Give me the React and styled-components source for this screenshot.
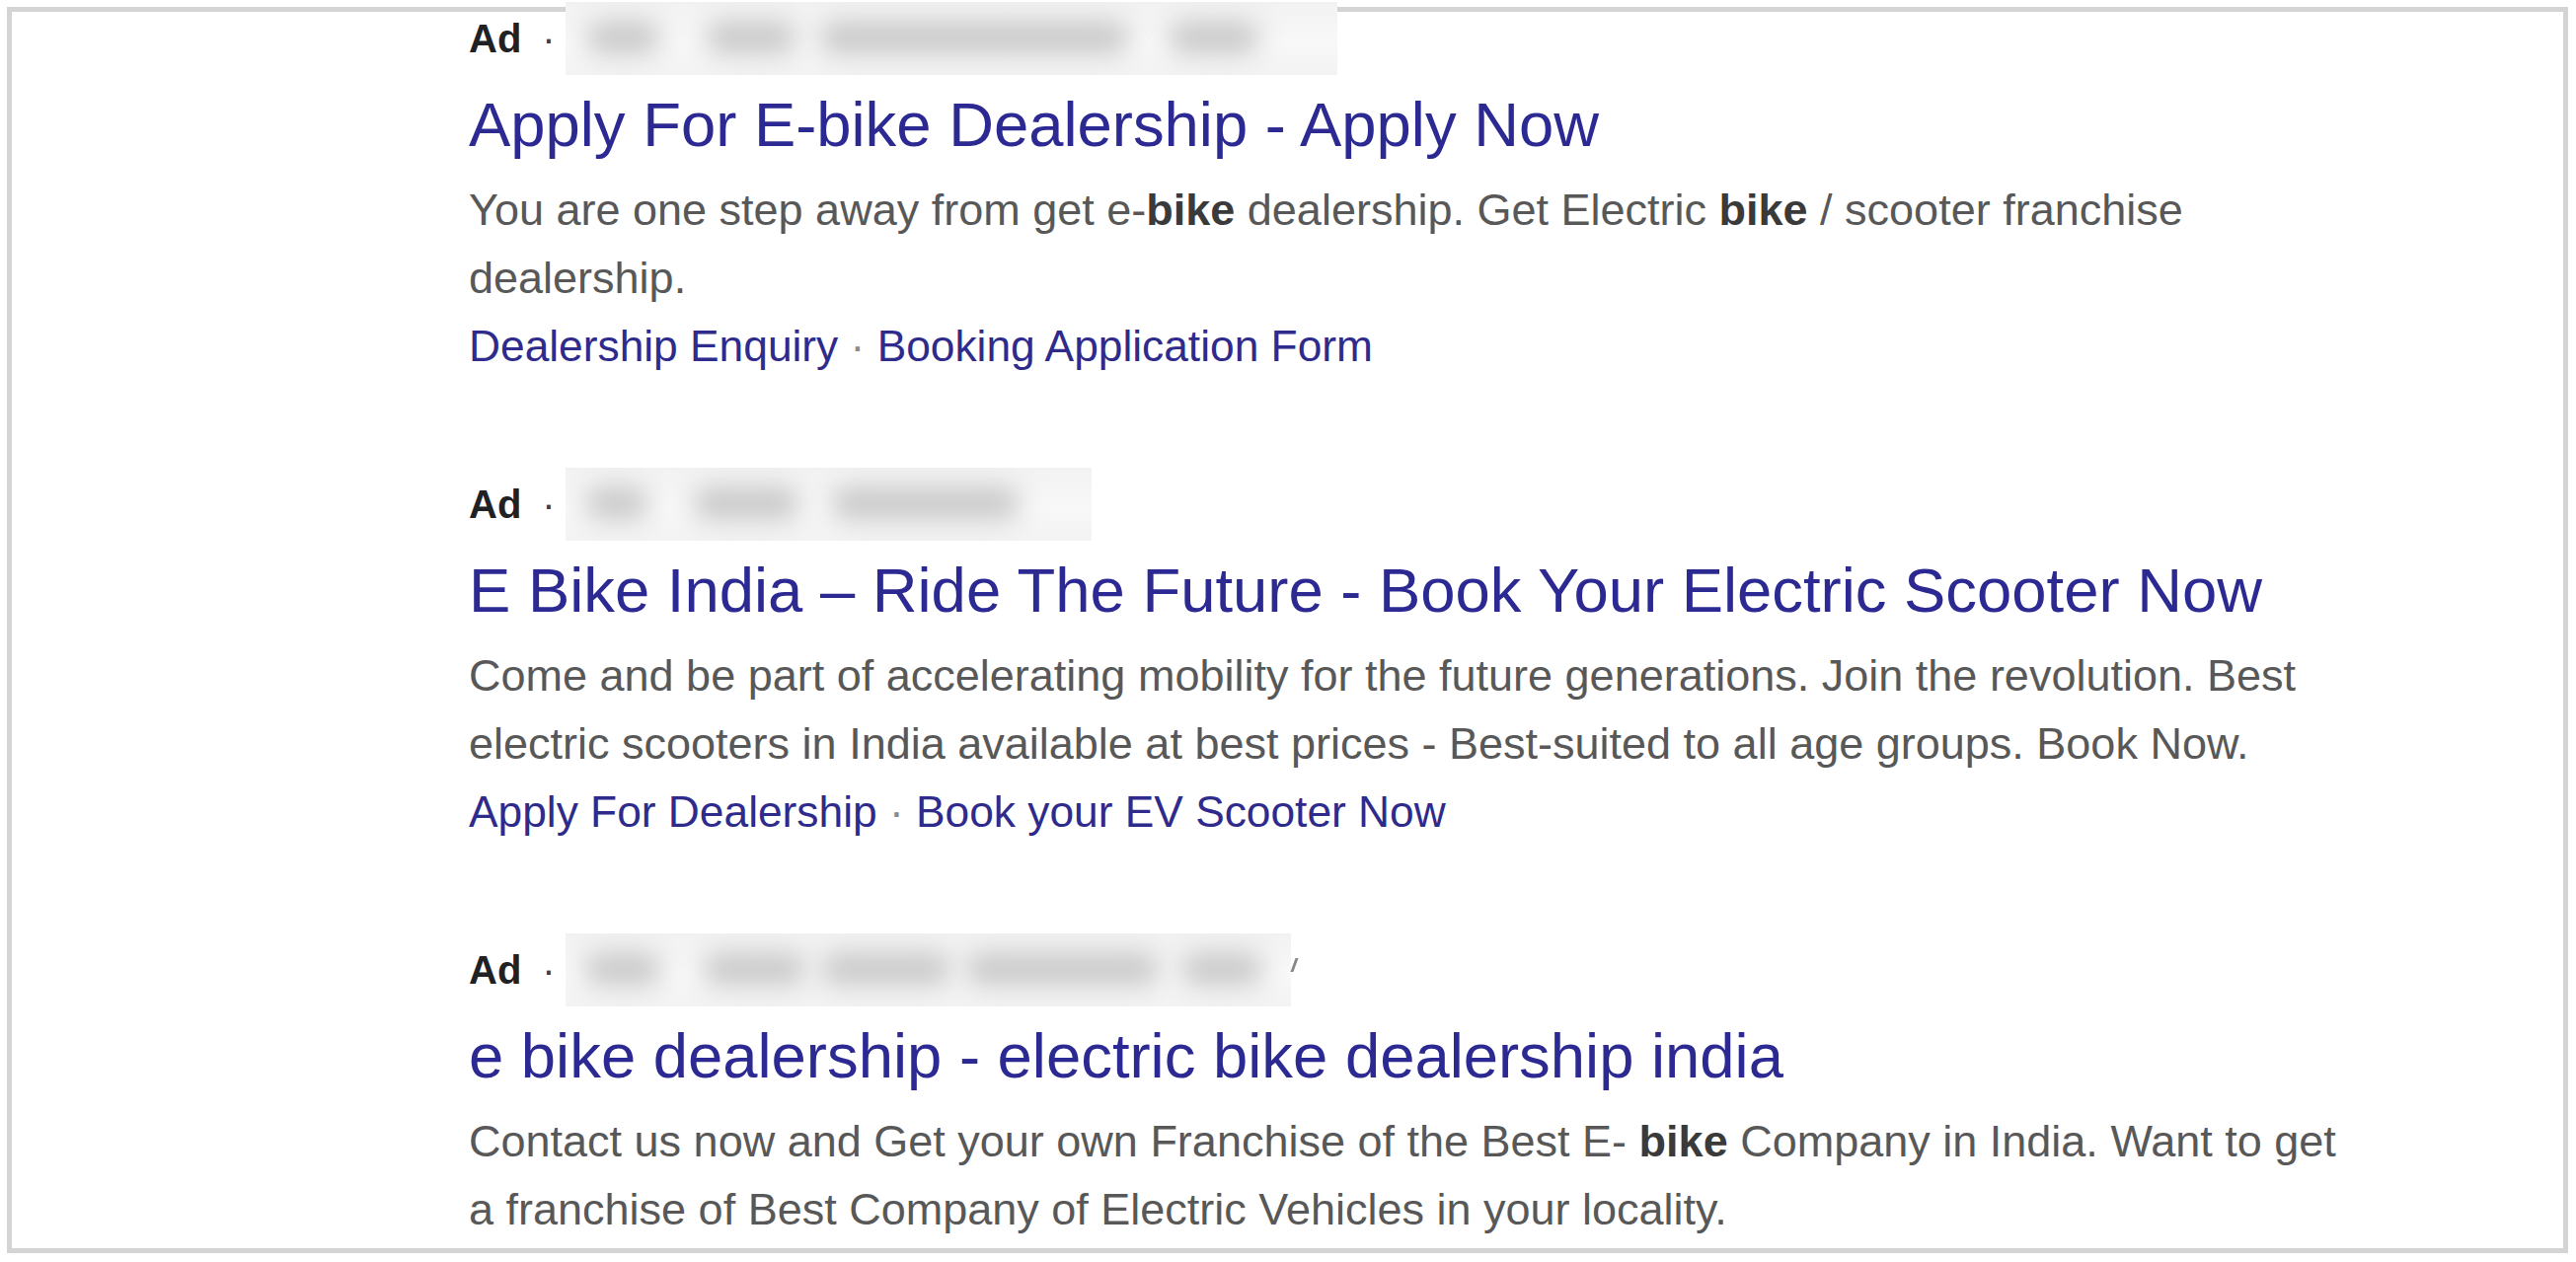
import React from "react";
import styled, { createGlobalStyle } from "styled-components";

const GlobalStyle = createGlobalStyle`
  html, body {
    margin: 0;
    padding: 0;
    background: #ffffff;
  }
  body {
    font-family: "Liberation Sans", Arial, sans-serif;
  }
`;

const Frame = styled.div`
  box-sizing: border-box;
  margin: 7px 0 0 7px;
  width: 2595px;
  height: 1263px;
  border: 5px solid #d4d4d4;
  padding: 2px 0 0 463px;
  background: #ffffff;
`;

const AdList = styled.div`
  display: flex;
  flex-direction: column;
  gap: 101px;
  width: 1910px;
`;

const AdItem = styled.article`
  display: flex;
  flex-direction: column;
`;

const AdMeta = styled.div`
  display: flex;
  align-items: center;
  height: 50px;
  font-size: 40px;
  line-height: 50px;
  color: #202124;
`;

const AdTag = styled.span`
  font-weight: 700;
`;

const MetaDot = styled.span`
  margin: 0 10px 0 21px;
  font-weight: 400;
  color: #3c4043;
`;

const BlurredUrl = styled.div`
  position: relative;
  box-sizing: border-box;
  flex: none;
  width: ${(p) => p.$w}px;
  height: 74px;
  margin: -12px 0;
  overflow: hidden;
  background: linear-gradient(180deg, #f2f2f2 0%, #f8f8f8 55%, #f3f3f3 100%);
`;

const Blob = styled.span`
  position: absolute;
  top: 19px;
  left: ${(p) => p.$x}px;
  width: ${(p) => p.$w}px;
  height: 34px;
  border-radius: 17px;
  background: #c9c9c9;
  filter: blur(13px);
`;

const UrlTail = styled.span`
  flex: none;
  width: 3px;
  height: 14px;
  margin: 0 0 10px 2px;
  background: #6a6a6a;
  transform: skewX(-20deg);
  opacity: 0.8;
`;

const Title = styled.h3`
  margin: 25px 0 0;
  font-size: 63.4px;
  line-height: 74px;
  font-weight: 400;
  color: #2c2a92;
  white-space: nowrap;
`;

const Description = styled.p`
  margin: 15px 0 0;
  font-size: 45px;
  line-height: 69px;
  color: #585858;

  b {
    font-weight: 700;
    color: #3a3a3a;
  }
`;

const Sitelinks = styled.div`
  font-size: 44.3px;
  line-height: 69px;
  color: #2e2b8c;
  white-space: nowrap;
`;

const Sep = styled.span`
  color: #8a8a8a;
`;

const ads = [
  {
    urlWidth: 782,
    blobs: [
      [21, 75],
      [142, 92],
      [257, 314],
      [611, 92],
    ],
    tail: false,
    title: "Apply For E-bike Dealership - Apply Now",
    desc: (
      <>
        You are one step away from get e-<b>bike</b> dealership. Get Electric{" "}
        <b>bike</b> / scooter franchise dealership.
      </>
    ),
    links: ["Dealership Enquiry", "Booking Application Form"],
  },
  {
    urlWidth: 533,
    blobs: [
      [20, 64],
      [129, 108],
      [269, 191],
    ],
    tail: false,
    title: "E Bike India – Ride The Future - Book Your Electric Scooter Now",
    desc: (
      <>
        Come and be part of accelerating mobility for the future generations.
        Join the revolution. Best electric scooters in India available at best
        prices - Best-suited to all age groups. Book Now.
      </>
    ),
    links: ["Apply For Dealership", "Book your EV Scooter Now"],
  },
  {
    urlWidth: 735,
    blobs: [
      [19, 78],
      [139, 105],
      [258, 133],
      [405, 197],
      [623, 84],
    ],
    tail: true,
    title: "e bike dealership - electric bike dealership india",
    desc: (
      <>
        Contact us now and Get your own Franchise of the Best E- <b>bike</b>{" "}
        Company in India. Want to get a franchise of Best Company of Electric
        Vehicles in your locality.
      </>
    ),
    links: null,
  },
];

function Ad({ ad }) {
  return (
    <AdItem>
      <AdMeta>
        <AdTag>Ad</AdTag>
        <MetaDot>·</MetaDot>
        <BlurredUrl $w={ad.urlWidth} aria-label="hidden url">
          {ad.blobs.map(([x, w], i) => (
            <Blob key={i} $x={x} $w={w} />
          ))}
        </BlurredUrl>
        {ad.tail && <UrlTail />}
      </AdMeta>
      <Title>{ad.title}</Title>
      <Description>{ad.desc}</Description>
      {ad.links && (
        <Sitelinks>
          {ad.links[0]}
          <Sep> · </Sep>
          {ad.links[1]}
        </Sitelinks>
      )}
    </AdItem>
  );
}

export default function App() {
  return (
    <>
      <GlobalStyle />
      <Frame>
        <AdList>
          {ads.map((ad, i) => (
            <Ad key={i} ad={ad} />
          ))}
        </AdList>
      </Frame>
    </>
  );
}
